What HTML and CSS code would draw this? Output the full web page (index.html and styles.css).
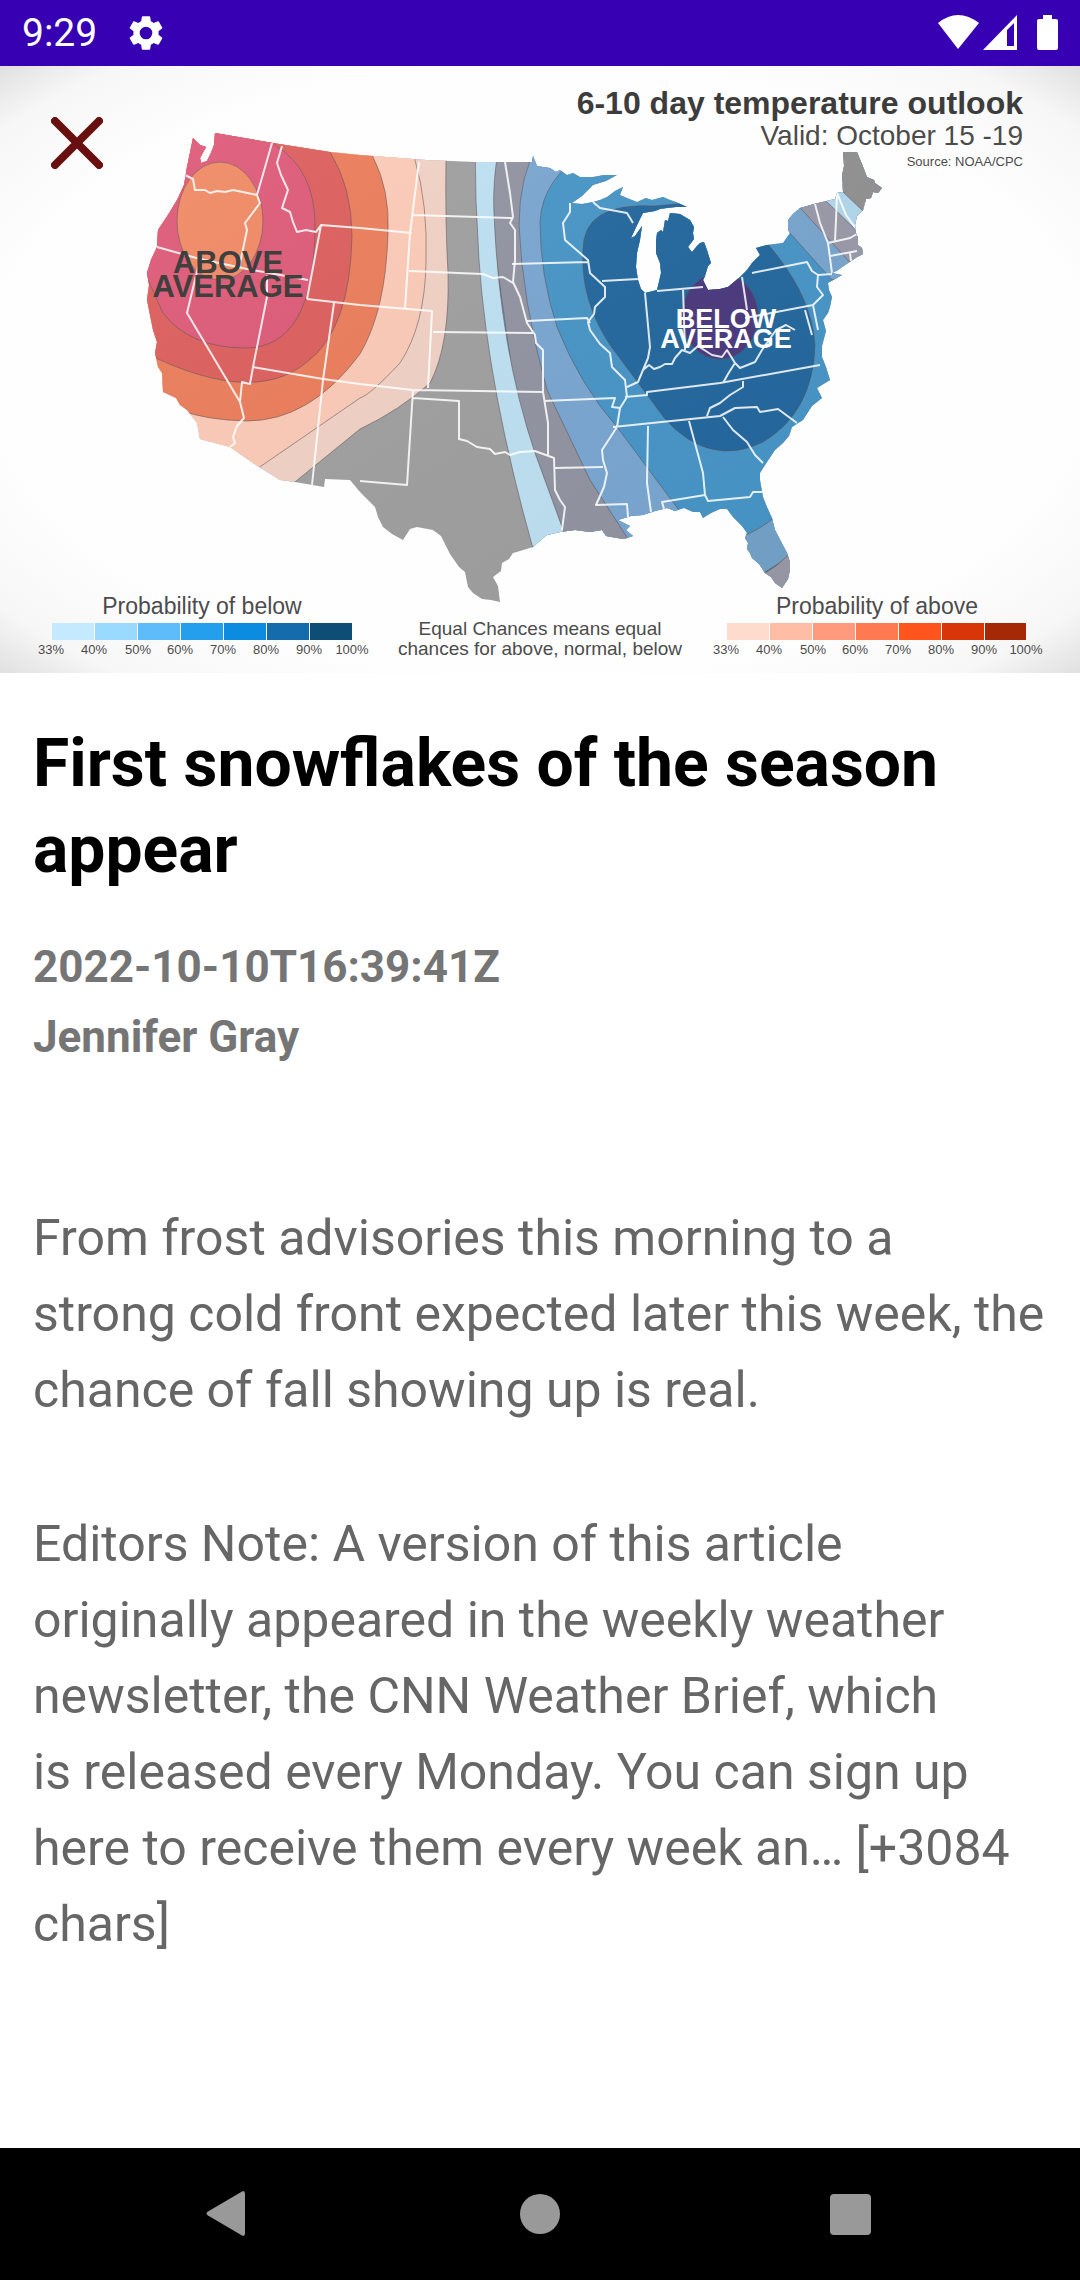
FILE: index.html
```html
<!DOCTYPE html>
<html lang="en">
<head>
<meta charset="utf-8">
<meta name="viewport" content="width=device-width, initial-scale=1">
<title>First snowflakes of the season appear</title>
<link rel="stylesheet" href="styles.css">
</head>
<body>
<header class="status">
  <time class="clock">9:29</time>
  <svg class="gear" viewBox="0 0 24 24" aria-hidden="true"><path d="M19.14 12.94c.04-.3.06-.61.06-.94 0-.32-.02-.64-.07-.94l2.03-1.58a.49.49 0 0 0 .12-.61l-1.92-3.32a.488.488 0 0 0-.59-.22l-2.39.96c-.5-.38-1.03-.7-1.62-.94l-.36-2.54a.484.484 0 0 0-.48-.41h-3.84c-.24 0-.43.17-.47.41l-.36 2.54c-.59.24-1.13.57-1.62.94l-2.39-.96c-.22-.08-.47 0-.59.22L2.74 8.87c-.12.21-.08.47.12.61l2.03 1.58c-.05.3-.09.63-.09.94s.02.64.07.94l-2.03 1.58a.49.49 0 0 0-.12.61l1.92 3.32c.12.22.37.29.59.22l2.39-.96c.5.38 1.03.7 1.62.94l.36 2.54c.05.24.24.41.48.41h3.84c.24 0 .44-.17.47-.41l.36-2.54c.59-.24 1.13-.56 1.62-.94l2.39.96c.22.08.47 0 .59-.22l1.92-3.32c.12-.22.07-.47-.12-.61l-2.01-1.58zM12 15.6A3.6 3.6 0 1 1 12 8.4a3.6 3.6 0 0 1 0 7.2z"/></svg>
  <svg class="signals" viewBox="0 0 122 38" aria-hidden="true">
    <path d="M0 9Q20 -7 41 9L20 35Z"/>
    <path fill-rule="evenodd" d="M45 36L79 1V36ZM69 16V32H76V9Z"/>
    <path d="M105 1h9v4h4q2 0 2 2v27q0 2-2 2H101q-2 0-2-2V7q0-2 2-2h4Z"/>
  </svg>
</header>

<main>
  <div class="hero">
    <svg class="map" viewBox="0 66 1080 607" role="img" aria-label="6-10 day temperature outlook map">
      <defs>
        <radialGradient id="vignette" cx="0.5" cy="0.5" r="0.72">
          <stop offset="0.7" stop-color="#fefefe"/>
          <stop offset="0.88" stop-color="#f7f7f7"/>
          <stop offset="1" stop-color="#dcdcdc"/>
        </radialGradient>
        <linearGradient id="land" x1="0" y1="0" x2="1" y2="1">
          <stop offset="0" stop-color="#fff" stop-opacity="0.08"/>
          <stop offset="1" stop-color="#000" stop-opacity="0.03"/>
        </linearGradient>
        <clipPath id="usa">
          <path d="M193 138L200 145L206 147L200 158L201 163L207 161L211 153L214 145L215 133L273 143L330 152L360 155L427 160L475 162L532 162L533 156L537 166L543 167L550 168L556 172L560 170L567 175L573 173L580 177L593 177L604 175L617 175L606 181L593 185L582 196L572 203L582 204L593 202L600 200L607 197L615 191L623 187L620 195L627 198L637 202L646 198L652 200L663 197L670 200L676 202L687 207L676 207L667 208L660 209L655 211L643 213L639 221L631 238L635 236L642 226L640 240L637 253L636 267L638 280L641 289L645 293L657 290L661 273L660 263L656 253L656 241L657 233L661 230L663 232L665 220L668 221L670 213L680 214L690 220L694 227L693 233L694 239L688 247L692 252L697 246L700 243L704 242L707 250L711 263L708 266L705 276L703 280L708 290L720 289L728 287L740 277L747 270L752 263L760 255L756 248L767 245L783 243L790 233L788 230L788 220L793 214L800 208L814 204L835 199L837 193L843 192L842 175L844 166L843 152L857 152L862 164L867 177L874 180L875 183L882 188L878 193L873 192L871 198L866 199L863 210L857 216L855 225L856 233L858 238L858 245L862 248L863 254L857 257L848 263L838 270L832 273L842 275L828 283L829 290L832 297L830 307L828 313L823 320L826 331L822 346L822 357L826 367L830 380L817 388L822 398L812 406L803 420L792 427L789 436L783 443L775 450L767 462L760 473L760 480L763 497L767 507L772 518L775 530L787 553L790 562L790 570L788 579L782 588L775 583L771 577L765 573L759 564L752 558L750 553L747 549L748 543L745 538L747 533L742 526L733 517L727 509L720 509L711 513L703 518L700 512L693 512L684 508L675 511L667 508L655 511L643 515L631 516L618 520L630 526L626 530L633 536L624 539L617 538L606 536L602 530L590 532L575 530L560 532L547 535L541 540L533 547L520 551L513 553L509 559L502 563L501 571L493 577L498 586L500 602L491 600L482 599L473 593L468 587L465 572L459 567L450 554L441 536L433 530L417 527L410 529L403 540L392 534L383 527L378 517L375 507L360 492L350 480L325 479L324 487L295 482L280 480L253 463L230 447L200 439L197 423L187 410L180 405L176 398L163 392L162 373L158 367L155 353L157 342L153 330L150 315L147 300L149 285L147 273L151 260L157 247L158 230L168 215L177 200L184 185L187 167Z"/>
        </clipPath>
      </defs>
      <rect x="0" y="66" width="1080" height="607" fill="url(#vignette)"/>
      <g clip-path="url(#usa)">
        <rect x="140" y="130" width="760" height="480" fill="#a0a0a0"/>
        <g class="contour">
          <path fill="#f2d2c5" d="M100 100H446V160Q445 220 448 273Q450 345 430 383Q400 410 360 429L290 486H100Z"/>
          <path fill="#fdcbb7" d="M100 100H410L415 160Q428 205 426 262Q425 325 400 363Q370 395 360 398L254 471H100Z"/>
          <path fill="#ec7c59" d="M100 100H360L373 157Q390 190 388 233Q386 310 360 354Q310 421 247 421Q205 420 180 410H100Z"/>
          <path fill="#dd5d5b" d="M100 100H310L330 152Q352 187 352 236Q350 330 307 362Q250 410 130 345Z"/>
          <path fill="#de5877" d="M150 100H260L275 145Q315 170 315 225Q315 348 245 348Q190 348 163 313L130 240Z"/>
          <ellipse cx="220" cy="221" rx="43" ry="59" fill="#f18862"/>
          <path fill="#4796c8" d="M532 100H900V700H533Z"/>
          <path fill="#7aa7d2" d="M590 150Q542 177 540 222Q540 275 557 327Q580 385 617 427L690 525L560 560L500 400V150Z"/>
          <path fill="#9295a2" d="M540 140Q519 175 519 225Q522 300 547 390L590 480L632 545H560L516 400L490 215V140Z"/>
          <path fill="#bfe2f4" d="M475 140H500Q492 180 494 215Q500 350 535 453L565 535L534 552Q488 390 479 260Q475 200 475 140Z"/>
          <path fill="#23689f" d="M655 206Q583 202 583 250Q580 300 610 345L665 419Q710 468 763 442Q813 412 815 345Q812 295 767 243L720 200Z"/>
          <ellipse cx="720" cy="316" rx="38" ry="43" fill="#4b397e"/>
          <path fill="#79a6cf" d="M780 222L832 280L870 270V190H790Z"/>
          <path fill="#9a9aa9" d="M795 202L853 266L880 250V180H800Z"/>
          <path fill="#b3d9ee" d="M822 197L858 232L880 220L850 180H822Z"/>
          <path fill="#929292" d="M841 190L864 212L900 195V140H838Z"/>
          <path fill="#74a3c9" d="M740 537Q760 530 776 516L800 550L762 574L740 560Z"/>
          <path fill="#9999a8" d="M762 574Q775 569 792 551V595H762Z"/>
        </g>
        <rect x="140" y="130" width="760" height="480" fill="url(#land)"/>
        <g class="borders">
          <path d="M185 175L193 179L195 190L205 190L210 193L217 191L225 192L233 190L257 195M272 143L257 195L260 203L245 223L247 230L239 268M157 247L200 259L247 269L308 280M282 146L277 163L281 175L288 190L282 208L290 212L293 222L297 232L306 230L316 232L321 225L307 299M321 225L360 228L412 233M307 299L360 305L432 311L428 388M334 303L323 380L312 485M200 259L187 313L240 402M267 275L267 297L253 367L250 384L242 382L240 402L244 418L237 426L233 437L235 443L230 447M253 367L323 379L360 384L413 390L543 392M419 162L410 233L405 308M413 215L512 218M409 271L483 274L493 278L503 277L513 283M505 162L510 193L513 217L510 223L515 230L515 260L513 282L520 297L527 323L535 335L536 343L543 350V392M433 332L533 333M413 390L407 485L360 481M413 398L459 401L459 439L467 441L477 447L490 449L495 454L505 452L510 455L520 452L535 451L554 458L555 490L560 500L565 507L562 530M543 392L548 423V457M544 401L615 398L612 407L620 408M555 468L603 467"/>
          <path d="M570 203V212L563 223L565 240L588 260L590 273L605 287L605 297L595 307L594 314L588 322L590 330L600 344L610 353L612 367L625 380L627 397L620 408L617 427L602 450L603 460L607 473L604 487L596 505L627 504L628 517M512 264L588 262M527 321L587 318L590 323M602 281L638 279M593 202L600 208L627 213L633 223M645 293L650 347L648 358L643 370L638 382L627 387M643 370L649 365L654 369L660 367L665 364L672 364L675 358L682 350L690 353L698 346L712 355L722 357L727 350L735 363L740 368L755 362L762 350M683 288L685 350M657 291L703 287M625 397L647 395L647 392L720 383L820 365M613 427L720 416L735 408L757 407L760 412L778 409L797 423M707 416L710 408L720 403L730 395L743 387V381M723 417L733 430L747 442L755 455L763 463M648 426L647 483L651 512M689 421L703 473L705 495L662 502L665 512M705 495L708 501L750 497L753 492L762 492M752 273L807 262L812 271L818 275L817 287L823 295L813 305L745 318M742 277L747 310M735 363L728 374L723 383M762 350L776 330L786 325L795 330M813 305L818 330M805 310L812 335"/>
          <path d="M815 204L820 223L828 243L832 273M828 243L850 238L857 234M837 193L836 220L835 241M837 193L846 215L857 230M830 256L857 251M850 253L851 261M832 274L818 275"/>
        </g>
      </g>
      <g class="label" font-weight="700" text-anchor="middle">
        <text fill="#3f3f3d" font-size="31"><tspan x="228" y="273">ABOVE</tspan><tspan x="228" y="297">AVERAGE</tspan></text>
        <text fill="#fff" font-size="27"><tspan x="726" y="328">BELOW</tspan><tspan x="726" y="348">AVERAGE</tspan></text>
      </g>
      <g class="label" text-anchor="end">
        <text x="1023" y="114" font-size="32" font-weight="700" fill="#3c3c3c">6-10 day temperature outlook</text>
        <text x="1023" y="145" font-size="28">Valid: October 15 -19</text>
        <text x="1023" y="166" font-size="13">Source: NOAA/CPC</text>
      </g>
      <g class="label" text-anchor="middle">
        <text x="202" y="614" font-size="23">Probability of below</text>
        <text x="877" y="614" font-size="23">Probability of above</text>
        <text x="540" y="635" font-size="19">Equal Chances means equal</text>
        <text x="540" y="655" font-size="19">chances for above, normal, below</text>
        <g font-size="13">
          <text x="51" y="654">33%</text><text x="94" y="654">40%</text><text x="138" y="654">50%</text><text x="180" y="654">60%</text><text x="223" y="654">70%</text><text x="266" y="654">80%</text><text x="309" y="654">90%</text><text x="352" y="654">100%</text>
          <text x="726" y="654">33%</text><text x="769" y="654">40%</text><text x="813" y="654">50%</text><text x="855" y="654">60%</text><text x="898" y="654">70%</text><text x="941" y="654">80%</text><text x="984" y="654">90%</text><text x="1026" y="654">100%</text>
        </g>
      </g>
      <g>
        <rect x="52" y="623" width="42" height="17" fill="#c5eaff"/><rect x="95" y="623" width="42" height="17" fill="#99dafe"/><rect x="138" y="623" width="42" height="17" fill="#5fbcfb"/><rect x="181" y="623" width="42" height="17" fill="#249fee"/><rect x="224" y="623" width="42" height="17" fill="#0b8ce0"/><rect x="267" y="623" width="42" height="17" fill="#146cac"/><rect x="310" y="623" width="42" height="17" fill="#0d4d76"/>
        <rect x="727" y="623" width="42" height="17" fill="#ffdbcd"/><rect x="770" y="623" width="42" height="17" fill="#ffbda6"/><rect x="813" y="623" width="42" height="17" fill="#ff9a7c"/><rect x="856" y="623" width="42" height="17" fill="#ff7a50"/><rect x="899" y="623" width="42" height="17" fill="#ff541c"/><rect x="942" y="623" width="42" height="17" fill="#d83608"/><rect x="985" y="623" width="41" height="17" fill="#a52807"/>
      </g>
    </svg>
    <button class="close" type="button" aria-label="Close">
      <svg viewBox="0 0 52 52" aria-hidden="true"><path d="M4 4L48 48M48 4L4 48"/></svg>
    </button>
  </div>

  <article class="article">
    <h1 class="title">First snowflakes of the season appear</h1>
    <div class="byline">
      <time datetime="2022-10-10T16:39:41Z">2022-10-10T16:39:41Z</time>
      <span>Jennifer Gray</span>
    </div>
    <div class="body">
      <p>From frost advisories this morning to a strong cold front expected later this week, the chance of fall showing up is real.</p>
      <p>Editors Note: A version of this article originally appeared in the weekly weather newsletter, the CNN Weather Brief, which is&nbsp;released every Monday. You can sign up here to receive them every week an… [+3084 chars]</p>
    </div>
  </article>
</main>

<nav class="nav" aria-label="System">
  <button type="button" aria-label="Back"><svg viewBox="0 0 48 48"><path d="M40 1.500Q43 0 43 4V43Q43 47 40 45.500L6 25.500Q3 23.500 6 21.500Z"/></svg></button>
  <button type="button" aria-label="Home"><svg viewBox="0 0 48 48"><circle cx="24" cy="24" r="20"/></svg></button>
  <button type="button" aria-label="Recent apps"><svg viewBox="0 0 48 48"><rect x="0" y="4" width="41" height="41" rx="4"/></svg></button>
</nav>
</body>
</html>
```

FILE: styles.css
```css
* {
  box-sizing: border-box;
}

body {
  margin: 0;
  min-height: 100vh;
  display: flex;
  flex-direction: column;
  background: #fff;
  font-family: Roboto, sans-serif;
}

button {
  padding: 0;
  border: 0;
  background: none;
}

svg {
  display: block;
}

.status {
  display: flex;
  align-items: center;
  height: 66px;
  padding: 0 20px 0 22px;
  background: #3700b3;
  color: #fff;
}

.status svg {
  fill: #fff;
}

.clock {
  font-size: 39px;
  line-height: 68px;
}

.gear {
  width: 42px;
  height: 42px;
  margin-left: 28px;
}

.signals {
  width: 122px;
  height: 38px;
  margin-left: auto;
}

main {
  flex: 1;
}

.hero {
  position: relative;
}

.map {
  width: 100%;
  height: auto;
}

.contour {
  stroke: rgb(90 80 85 / 55%);
  stroke-width: 1;
}

.borders {
  fill: none;
  stroke: rgb(255 255 255 / 85%);
  stroke-width: 2;
  stroke-linejoin: round;
}

.label {
  font-family: "Liberation Sans", Arial, sans-serif;
  fill: #4c4c4c;
}

.close {
  position: absolute;
  top: 33px;
  left: 33px;
  padding: 18px;
}

.close svg {
  width: 52px;
  height: 52px;
  fill: none;
  stroke: #681010;
  stroke-width: 8;
  stroke-linecap: round;
}

.article {
  padding: 48px 33px;
}

.title {
  margin: 0;
  font-size: 66px;
  font-weight: 700;
  line-height: 86px;
  color: #000;
}

.byline {
  display: flex;
  flex-direction: column;
  margin-top: 39px;
  font-size: 44px;
  font-weight: 700;
  line-height: 70px;
  color: #757575;
}

.body {
  margin-top: 128px;
  font-size: 50px;
  line-height: 76px;
  color: #666;
}

.body p {
  margin: 0 0 78px;
}

.nav {
  display: grid;
  grid-template-columns: repeat(3, 1fr);
  height: 132px;
  padding: 0 69px;
  background: #000;
}

.nav button {
  display: grid;
  place-items: center;
}

.nav svg {
  width: 48px;
  height: 48px;
  fill: #999;
}
```
